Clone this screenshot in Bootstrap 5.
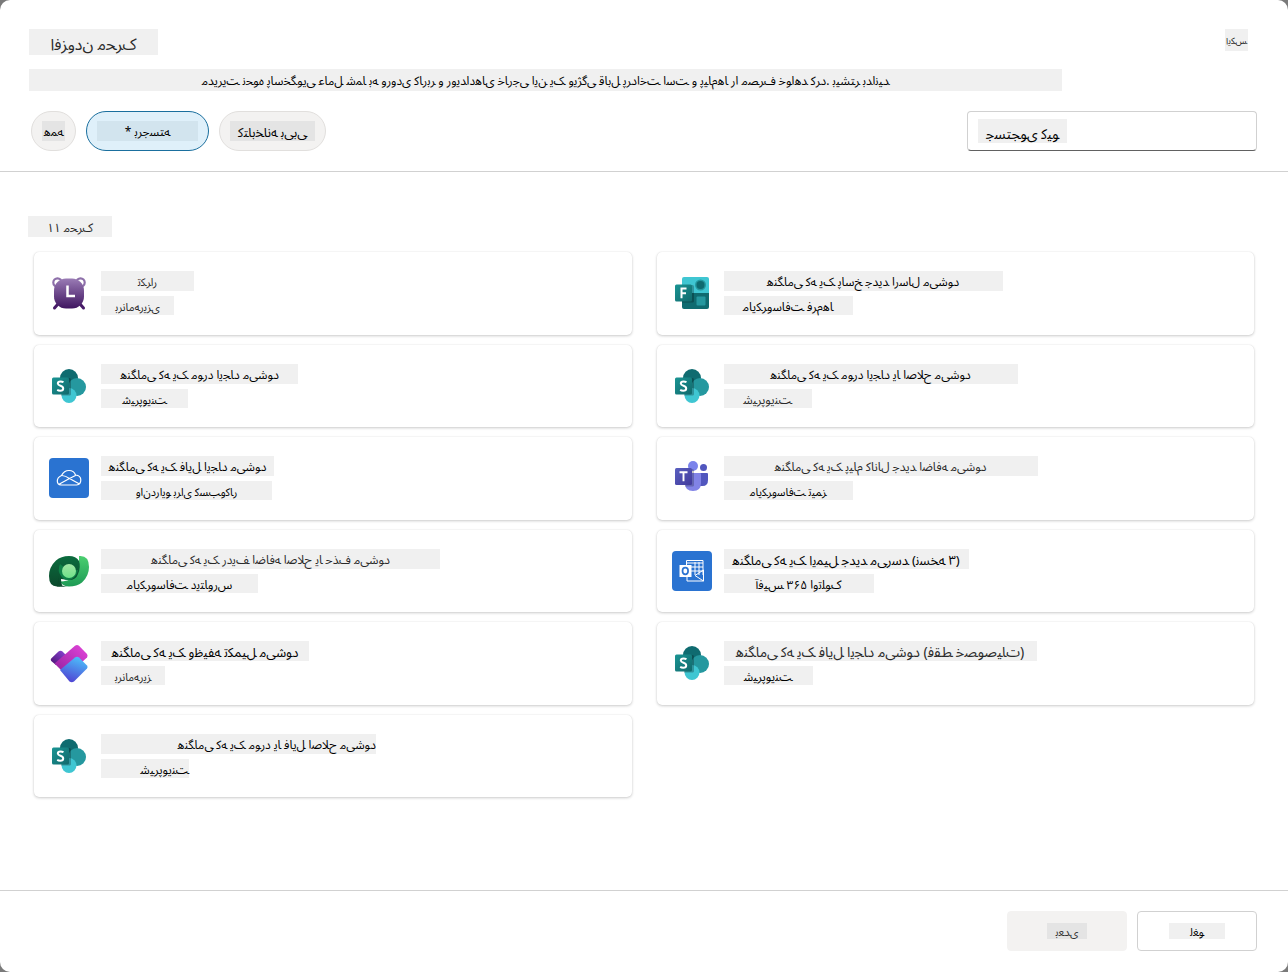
<!DOCTYPE html>
<html lang="fa">
<head>
<meta charset="utf-8">
<meta name="viewport" content="width=device-width, initial-scale=1">
<title>افزودن محرک</title>
<link rel="stylesheet" href="https://cdn.jsdelivr.net/npm/bootstrap@5.3.0/dist/css/bootstrap.min.css">
<style>
  body { background: #7a7a7a; font-family: "Noto Sans Arabic", "Noto Sans", sans-serif; font-size: 12px; line-height: 20px; color: #000; }
  .dialog-panel { min-height: 100vh; background: #fff; border-radius: 10px; }
  .glyphs { display: block; direction: ltr; unicode-bidi: bidi-override; white-space: nowrap; text-align: center; }
  .tint { background: #f0f0f0; }
  .line { border-color: #d1d1d1 !important; }
  .t11 { font-size: 11px; } .t12 { font-size: 12px; } .t13 { font-size: 13px; } .t14 { font-size: 14px; } .t16 { font-size: 16px; }
  .soft { color: #2a2a2a; }
  .panel-head { padding: 29px 31px 20px 29px; }
  .dialog-title { width: 129px; height: 26px; line-height: 32px; margin: 0; }
  .close-btn { width: 23px; height: 22px; margin-right: 9px; border: 0; padding: 0; background: #f0f0f0; font-size: 9px; line-height: 26px; color: #222; }
  .intro { width: 1033px; max-width: 100%; height: 22px; line-height: 26px; margin: 14px 0 20px; }
  .chips { gap: 10px; padding-left: 2px; }
  .chip { height: 40px; padding: 0 10px; border: 1px solid #e1dfdd; border-radius: 20px; background: #f3f2f1; }
  .chip .glyphs { background: #e4e4e4; height: 20px; line-height: 24px; color: #000; }
  .chip.active { background: #dff0fa; border-color: #1a6f9e; }
  .chip.active .glyphs { background: #d2e4ee; }
  .search-box { width: 290px; height: 40px; border: 1px solid #d1d1d1; border-bottom-color: #616161; border-radius: 4px; padding: 7px 10px; }
  .search-box input { width: 89px; height: 24px; border: 0; padding: 6px 0 0; background: #f0f0f0; outline: 0; line-height: 18px; }
  .search-box input::placeholder { color: #000; opacity: 1; direction: ltr; unicode-bidi: bidi-override; }
  .panel-main { padding: 44px 34px 93px; }
  .count { width: 84px; height: 21px; line-height: 26px; margin: 0 0 15px -6px; }
  .tiles { display: grid; grid-template-columns: 1fr 1fr; grid-auto-rows: 1fr; gap: 10px 25px; min-height: 545px; }
  .tile { border: 0; border-radius: 5px; background: #fff; padding: 0 15px; gap: 12px; box-shadow: 0 1px 3px rgba(0,0,0,.2), 0 0 1px rgba(0,0,0,.12); color: inherit; }
  .tile svg { flex: none; }
  .tile .glyphs { height: 20px; line-height: 24px; }
  .tile .glyphs + .glyphs { height: 19px; line-height: 23px; margin-top: 5px; }
  .panel-foot { padding: 20px 31px 21px; gap: 10px; }
  .foot-btn { width: 120px; height: 40px; border: 1px solid #d1d1d1; border-radius: 4px; background: #fff; padding: 0; }
  .foot-btn .glyphs { width: 56px; height: 16px; line-height: 20px; margin: 0 auto; background: #f0f0f0; }
  .foot-btn:disabled { background: #f3f2f1; border-color: #f3f2f1; color: #333; }
  .foot-btn:disabled .glyphs { width: 40px; background: #e4e4e4; }
</style>
</head>
<body>
<svg width="0" height="0" class="position-absolute" aria-hidden="true">
  <defs>
    <linearGradient id="teal" x1="0" y1="0" x2="1" y2="1"><stop offset="0" stop-color="#1a9594"/><stop offset="1" stop-color="#11696c"/></linearGradient>
    <linearGradient id="purple" x1="0" y1="0" x2="0" y2="1"><stop offset="0" stop-color="#9a7bb5"/><stop offset="1" stop-color="#3f1560"/></linearGradient>
    <linearGradient id="indigo" x1="0" y1="0" x2="1" y2="1"><stop offset="0" stop-color="#5a60c0"/><stop offset="1" stop-color="#413a9c"/></linearGradient>
    <linearGradient id="leafDark" x1="0" y1="0" x2="0" y2="1"><stop offset="0" stop-color="#0b6b3e"/><stop offset="1" stop-color="#0b4a2c"/></linearGradient>
    <linearGradient id="leafLight" x1="0" y1="0" x2="0" y2="1"><stop offset="0" stop-color="#4bcf70"/><stop offset="1" stop-color="#1d9a55"/></linearGradient>
    <linearGradient id="core" x1="0" y1="0" x2="0" y2="1"><stop offset="0" stop-color="#a0e6a4"/><stop offset="1" stop-color="#6fe289"/></linearGradient>
    <linearGradient id="pink" x1="1" y1="0" x2="0" y2="1"><stop offset="0" stop-color="#e546dc"/><stop offset="1" stop-color="#8f1f9c"/></linearGradient>
    <linearGradient id="sky" x1="0.7" y1="0" x2="0.3" y2="1"><stop offset="0" stop-color="#4cc0fb"/><stop offset="1" stop-color="#5040d2"/></linearGradient>
    <linearGradient id="violet" x1="1" y1="0" x2="0" y2="1"><stop offset="0" stop-color="#8b45d8"/><stop offset="1" stop-color="#4b1370"/></linearGradient>
    <symbol id="sharepoint" viewBox="0 0 40 40">
      <circle cx="20" cy="12" r="9" fill="#0f6b70"/><circle cx="28" cy="21" r="9" fill="#25989f"/><circle cx="20" cy="29.500" r="7.500" fill="#3fc6d2"/>
      <path d="M11 12h9.500q1.500 0 1.500 1.500V28q0 1-1 1.500H12z" fill="#000" opacity=".25"/>
      <rect x="3" y="11.500" width="17" height="17" rx="1.500" fill="url(#teal)"/>
      <path d="M14.500 16.300q-1.300-.9-3-.9-2.700 0-2.700 2.100 0 1.300 2.700 2.300 2.700 1 2.700 2.700 0 2.200-3 2.200-1.800 0-3-.8" fill="none" stroke="#fff" stroke-width="2"/>
    </symbol>
    <symbol id="clock" viewBox="0 0 40 40">
      <circle cx="8.500" cy="9.500" r="4.200" fill="none" stroke="#8e70aa" stroke-width="2.200"/><circle cx="31.500" cy="9.500" r="4.200" fill="none" stroke="#8e70aa" stroke-width="2.200"/>
      <path d="M9 31l-3.500 4M31 31l3.500 4" stroke="#471b68" stroke-width="3" stroke-linecap="round"/>
      <rect x="5" y="5.500" width="30" height="30" rx="12" fill="url(#purple)"/>
      <path d="M18.500 12.500V23H26" fill="none" stroke="#fff" stroke-width="2.500"/>
    </symbol>
    <symbol id="forms" viewBox="0 0 40 40">
      <path d="M10 6q0-2 2-2h23q2 0 2 2v15H10z" fill="#3fc6d2"/><path d="M10 20h27v14q0 2-2 2H12q-2 0-2-2z" fill="#0f6b70"/>
      <circle cx="28.500" cy="12" r="5.500" fill="#25989f"/><circle cx="28.500" cy="12" r="4" fill="#0f6b70"/><rect x="24.500" y="23.500" width="9" height="9" rx="1" fill="#25989f"/>
      <path d="M10 12h10.500q1.500 0 1.500 1.500V28q0 1-1 1.500H10z" fill="#000" opacity=".25"/>
      <rect x="3" y="11.500" width="17" height="17" rx="1.500" fill="url(#teal)"/>
      <path d="M9.500 25.200v-9.700h5M9.500 20.300h4.500" fill="none" stroke="#fff" stroke-width="2"/>
    </symbol>
    <symbol id="cloud" viewBox="0 0 40 40">
      <rect width="40" height="40" rx="4" fill="#2a73d1"/>
      <path d="M12 27q-3.700-.4-3.700-4t4.200-5.500q2.500-5 7.500-5t6.500 4.500q5.300.5 5.300 5 0 4.500-4.200 5zM13 17.500q3.500.2 7.500 3l10 5.500M10 26.200l10.500-5.700 6-3" fill="none" stroke="#fff" stroke-width="1.200" stroke-linejoin="round"/>
    </symbol>
    <symbol id="teams" viewBox="0 0 40 40">
      <circle cx="31.500" cy="9.500" r="3.500" fill="#5156be"/><path d="M27 15h8q1 0 1 1v6q0 6-5.500 6H27z" fill="#5156be"/>
      <circle cx="21" cy="8" r="5" fill="#7b83eb"/><path d="M12 15h16q1 0 1 1v9q0 8-8 8t-8-8z" fill="#8183e6"/>
      <path d="M12 11h8.500q1.500 0 1.500 1.500V27q0 1-1 1.500h-8z" fill="#000" opacity=".22"/>
      <rect x="3" y="10" width="17" height="17" rx="1.500" fill="url(#indigo)"/><path d="M7.500 14.300h8M11.500 14.300v9" stroke="#fff" stroke-width="1.900"/>
    </symbol>
    <symbol id="dataverse" viewBox="0 0 40 40">
      <path d="M30 5q10-1 10 11 0 9-7 15.500-5 4-13 4-6 0-9-5 8 0 13-4 6-5 6-12z" fill="url(#leafLight)"/>
      <path d="M8 35.500Q0 35.500 0 25q0-9 7-15.500Q12 5 20 5q7 0 10 5 2 6-1 13-2 6-9 6l-8-1q0 3 1 6-2 1.500-5 1.500z" fill="url(#leafDark)"/>
      <path d="M10 25q-2 10 8 10.500-5 .5-10 0z" fill="#0b4a2c"/>
      <path d="M11 13q-3 7 1 12 4 6 11 3 5-3 6-9l-9 1z" fill="#0f8248"/>
      <circle cx="20" cy="20" r="7" fill="url(#core)"/>
    </symbol>
    <symbol id="outlook" viewBox="0 0 40 40">
      <rect width="40" height="40" rx="4" fill="#2a73d1"/>
      <g fill="none" stroke="#fff"><path d="M14.500 14V9.500h16.500V24M14.500 12h16.500M19 16h12M19 20h12M23 11v13M27 11v13M15 26v4h16.500V19l-8.500 5.500L31.500 30"/></g>
      <path d="M7.500 14h12v12h-12z" fill="#fff"/><ellipse cx="13.300" cy="20" rx="2.800" ry="3.300" fill="none" stroke="#2a73d1" stroke-width="1.700"/>
    </symbol>
    <symbol id="planner" viewBox="0 0 40 40">
      <path d="M2.200 15.500L9.500 8.500q2-1.600 4 0L17 12 7 22l-4.800-4q-1-1.200 0-2.500z" fill="url(#violet)"/>
      <path d="M5.500 20.500L26 2.700q2-1.400 4 0L38 11q1.200 1.500 0 3.500L20 31q-2 1.500-4 0z" fill="url(#pink)"/>
      <path d="M11 27L26 14.500q2-1.300 4 0l8 8q1.300 1.500 0 3L25 38.500q-2.200 1.500-4.500 0z" fill="url(#sky)"/>
    </symbol>
  </defs>
</svg>

<div class="dialog-panel d-flex flex-column" role="dialog" aria-labelledby="dlgTitle">
  <header class="panel-head border-bottom line">
    <div class="d-flex justify-content-between align-items-start">
      <h1 class="dialog-title glyphs tint t16 fw-normal soft" id="dlgTitle">افزودن محرک</h1>
      <button type="button" class="close-btn glyphs">ایکس</button>
    </div>
    <p class="intro glyphs tint t12">مدیریت نحوه پاسخگویی عامل شما به ورودی کاربر و رویدادهای خارجی این یک ویژگی قابل پرداخت است و پیام‌ها را مصرف خواهد کرد. بیشتر بدانید</p>
    <div class="d-flex justify-content-between align-items-center">
      <div class="chips d-flex">
        <button type="button" class="chip"><span class="glyphs t12" style="width:23px">همه</span></button>
        <button type="button" class="chip active"><span class="glyphs t12" style="width:101px">* برجسته</span></button>
        <button type="button" class="chip"><span class="glyphs t13" style="width:85px">کتابخانه بی‌بی</span></button>
      </div>
      <div class="search-box"><input type="text" class="glyphs t14" aria-label="جستجوی کیو" placeholder="جستجوی کیو"></div>
    </div>
  </header>

  <main class="panel-main flex-grow-1">
    <h2 class="count glyphs tint t12 fw-normal soft">۱۱ محرک</h2>
    <div class="tiles">
      <button type="button" class="tile d-flex align-items-center"><svg width="40" height="40"><use href="#clock"/></svg><span><span class="glyphs tint t11 soft" style="width:93px">تکرار</span><span class="glyphs tint t11 soft" style="width:73px">برنامه‌ریزی</span></span></button>
      <button type="button" class="tile d-flex align-items-center"><svg width="40" height="40"><use href="#forms"/></svg><span><span class="glyphs tint t12" style="width:279px">هنگامی که یک پاسخ جدید ارسال می‌شود</span><span class="glyphs tint t12" style="width:129px">مایکروسافت فرم‌ها</span></span></button>
      <button type="button" class="tile d-flex align-items-center"><svg width="40" height="40"><use href="#sharepoint"/></svg><span><span class="glyphs tint t12" style="width:197px">هنگامی که یک مورد ایجاد می‌شود</span><span class="glyphs tint t11" style="width:87px">شیرپوینت</span></span></button>
      <button type="button" class="tile d-flex align-items-center"><svg width="40" height="40"><use href="#sharepoint"/></svg><span><span class="glyphs tint t12" style="width:294px">هنگامی که یک مورد ایجاد یا اصلاح می‌شود</span><span class="glyphs tint t12 soft" style="width:88px">شیرپوینت</span></span></button>
      <button type="button" class="tile d-flex align-items-center"><svg width="40" height="40"><use href="#cloud"/></svg><span><span class="glyphs tint t12" style="width:173px">هنگامی که یک فایل ایجاد می‌شود</span><span class="glyphs tint t11" style="width:171px">وان‌درایو برای کسب‌وکار</span></span></button>
      <button type="button" class="tile d-flex align-items-center"><svg width="40" height="40"><use href="#teams"/></svg><span><span class="glyphs tint t12 soft" style="width:314px">هنگامی که یک پیام کانال جدید اضافه می‌شود</span><span class="glyphs tint t11" style="width:129px">مایکروسافت تیمز</span></span></button>
      <button type="button" class="tile d-flex align-items-center"><svg width="40" height="40"><use href="#dataverse"/></svg><span><span class="glyphs tint t12 soft" style="width:339px">هنگامی که یک ردیف اضافه اصلاح یا حذف می‌شود</span><span class="glyphs tint t12" style="width:157px">مایکروسافت دیتاورس</span></span></button>
      <button type="button" class="tile d-flex align-items-center"><svg width="40" height="40"><use href="#outlook"/></svg><span><span class="glyphs tint t13" style="width:245px">هنگامی که یک ایمیل جدید می‌رسد (نسخه ۳)</span><span class="glyphs tint t12" style="width:150px">آفیس ۳۶۵ اوتلوک</span></span></button>
      <button type="button" class="tile d-flex align-items-center"><svg width="40" height="40"><use href="#planner"/></svg><span><span class="glyphs tint t13" style="width:208px">هنگامی که یک وظیفه تکمیل می‌شود</span><span class="glyphs tint t11 soft" style="width:64px">برنامه‌ریز</span></span></button>
      <button type="button" class="tile d-flex align-items-center"><svg width="40" height="40"><use href="#sharepoint"/></svg><span><span class="glyphs tint t14 soft" style="width:313px">هنگامی که یک فایل ایجاد می‌شود (فقط خصوصیات)</span><span class="glyphs tint t12" style="width:89px">شیرپوینت</span></span></button>
      <button type="button" class="tile d-flex align-items-center"><svg width="40" height="40"><use href="#sharepoint"/></svg><span><span class="glyphs tint t12 text-end" style="width:275px">هنگامی که یک مورد یا فایل اصلاح می‌شود</span><span class="glyphs tint t12 text-end" style="width:88px">شیرپوینت</span></span></button>
    </div>
  </main>

  <footer class="panel-foot border-top line d-flex justify-content-end">
    <button type="button" class="foot-btn" disabled><span class="glyphs t11">بعدی</span></button>
    <button type="button" class="foot-btn"><span class="glyphs t11">لغو</span></button>
  </footer>
</div>
<script src="https://cdn.jsdelivr.net/npm/bootstrap@5.3.0/dist/js/bootstrap.bundle.min.js"></script>
<script>
  // Isolated form of each letter and how many forms it has (2: joins only the letter before it).
  const FORMS = {
    'آ': [0xFE81, 2], 'ا': [0xFE8D, 2], 'ب': [0xFE8F, 4], 'پ': [0xFB56, 4], 'ت': [0xFE95, 4], 'ج': [0xFE9D, 4],
    'ح': [0xFEA1, 4], 'خ': [0xFEA5, 4], 'د': [0xFEA9, 2], 'ذ': [0xFEAB, 2], 'ر': [0xFEAD, 2], 'ز': [0xFEAF, 2],
    'ژ': [0xFB8A, 2], 'س': [0xFEB1, 4], 'ش': [0xFEB5, 4], 'ص': [0xFEB9, 4], 'ض': [0xFEBD, 4], 'ط': [0xFEC1, 4],
    'ظ': [0xFEC5, 4], 'ع': [0xFEC9, 4], 'غ': [0xFECD, 4], 'ف': [0xFED1, 4], 'ق': [0xFED5, 4], 'ک': [0xFB8E, 4],
    'گ': [0xFB92, 4], 'ل': [0xFEDD, 4], 'م': [0xFEE1, 4], 'ن': [0xFEE5, 4], 'ه': [0xFEE9, 4], 'و': [0xFEED, 2],
    'ی': [0xFBFC, 4], '\uE000': [0xFEFB, 2]
  };
  function shape(text) {
    // A lam followed by an alef is one ligature with its own two forms.
    const letters = [...text.replace(/لا/g, '\uE000')];
    return letters.map((ch, i) => {
      const form = FORMS[ch];
      if (!form) return ch === '\u200c' ? '' : ch;
      const before = FORMS[letters[i - 1]], after = FORMS[letters[i + 1]];
      const joinsBefore = before && before[1] === 4, joinsAfter = form[1] === 4 && after;
      return String.fromCodePoint(form[0] + (joinsBefore && joinsAfter ? 3 : joinsAfter ? 2 : joinsBefore ? 1 : 0));
    }).join('');
  }
  document.querySelectorAll('.glyphs').forEach(el => {
    if (el.placeholder) el.placeholder = shape(el.placeholder);
    else el.textContent = shape(el.textContent);
  });
</script>
</body>
</html>
